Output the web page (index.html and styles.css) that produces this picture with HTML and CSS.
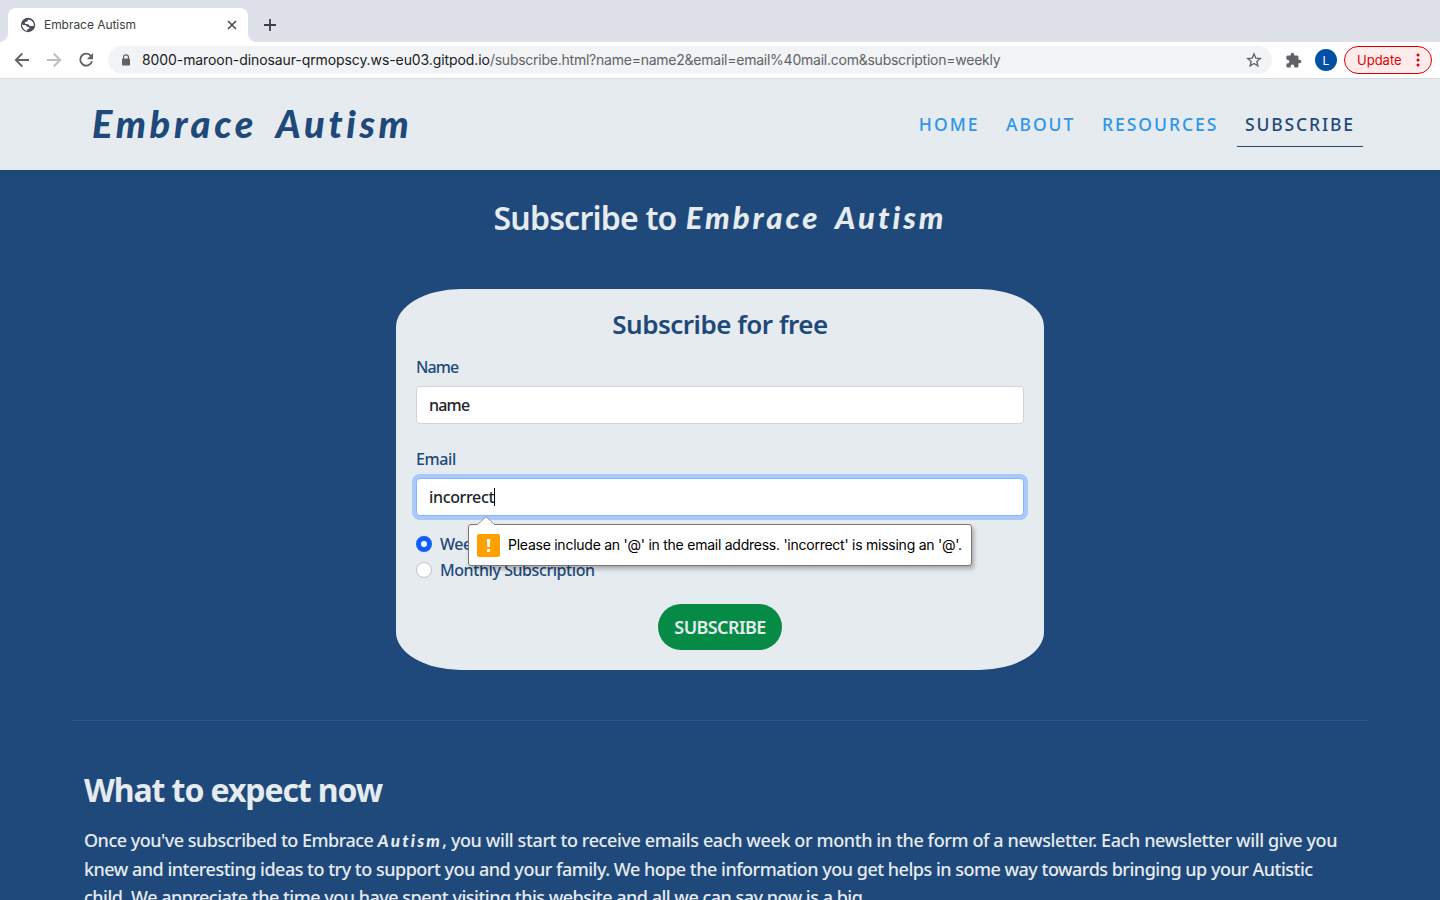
FILE: index.html
```html
<!DOCTYPE html>
<html lang="en">
<head>
<meta charset="utf-8">
<title>Embrace Autism</title>
<link rel="stylesheet" href="styles.css">
</head>
<body>
<div class="tabstrip">
  <div class="tab">
    <svg class="globe" viewBox="0 0 16 16"><circle cx="8" cy="8" r="7.2" fill="#4a4d55"/><path d="M8.600 2.500 7.300 4.200 4.800 5.200 5.300 7 8.400 7.300 9.600 8.900 13.900 8.900A6 6 0 0 0 8.600 2.500ZM2.200 6.600A6 6 0 0 0 7.100 13.900L7.400 12.300 9.500 11.500 9.200 10.200 6.800 9.500 5.800 8.200 2.800 8Z" fill="#fff"/></svg>
    <span class="tab-title">Embrace Autism</span>
    <svg class="close" viewBox="0 0 10 10"><path d="M1 1 9 9M9 1 1 9" stroke="#45494d" stroke-width="1.6"/></svg>
  </div>
  <svg class="plus" viewBox="0 0 12 12"><path d="M6 0V12M0 6H12" stroke="#3c4043" stroke-width="1.8"/></svg>
</div>
<div class="toolbar">
  <svg class="nav-icon" viewBox="0 0 16 16"><path d="M15 8H2M8.3 1.5 1.8 8l6.5 6.5" fill="none" stroke="#5f6368" stroke-width="1.8"/></svg>
  <svg class="nav-icon" viewBox="0 0 16 16"><path d="M1 8H14M7.7 1.5 14.2 8l-6.5 6.5" fill="none" stroke="#babcbe" stroke-width="1.8"/></svg>
  <svg class="nav-icon" viewBox="0 0 16 16"><path d="M13.3 4.4A6 6 0 1 0 14 9.3" fill="none" stroke="#5f6368" stroke-width="1.9"/><path d="M15 1V7.2H8.8Z" fill="#5f6368"/></svg>
  <div class="omnibox">
    <svg class="lock" viewBox="0 0 10 13"><path d="M2.5 5V3.3a2.5 2.5 0 0 1 5 0V5" fill="none" stroke="#5f6368" stroke-width="1.2"/><rect x="1" y="4.5" width="8" height="7" rx=".8" fill="#5f6368"/></svg>
    <span class="url"><span class="host">8000-maroon-dinosaur-qrmopscy.ws-eu03.gitpod.io</span><span class="path">/subscribe.html?name=name2&amp;email=email%40mail.com&amp;subscription=weekly</span></span>
    <svg class="star" viewBox="0 0 24 24"><path d="m12 3 2.7 6.1 6.7.6-5.1 4.5 1.5 6.5-5.8-3.4-5.8 3.4 1.5-6.5-5.1-4.5 6.7-.6Z" fill="none" stroke="#5f6368" stroke-width="2"/></svg>
  </div>
  <svg class="puzzle" viewBox="0 0 24 24"><path d="M20.5 11H19V7c0-1.1-.9-2-2-2h-4V3.500a2.500 2.500 0 0 0-5 0V5H4c-1.100 0-2 .9-2 2v3.800h1.500a2.700 2.700 0 0 1 0 5.400H2V20c0 1.100.9 2 2 2h3.800v-1.500a2.700 2.700 0 0 1 5.400 0V22H17c1.100 0 2-.9 2-2v-4h1.500a2.500 2.500 0 0 0 0-5Z" fill="#5f6368"/></svg>
  <div class="avatar">L</div>
  <div class="update"><span>Update</span><svg viewBox="0 0 4 14"><g fill="#d00"><circle cx="2" cy="2" r="1.5"/><circle cx="2" cy="7" r="1.5"/><circle cx="2" cy="12" r="1.5"/></g></svg></div>
</div>
<header class="site-header">
  <div class="logo">Embrace Autism</div>
  <nav class="menu">
    <a>HOME</a><a>ABOUT</a><a>RESOURCES</a><a class="active">SUBSCRIBE</a>
  </nav>
</header>
<main class="page">
  <h1 class="title"><span class="title-text">Subscribe to</span><span class="brand">Embrace Autism</span></h1>
  <form class="card" novalidate>
    <h2 class="card-title"><span>Subscribe for free</span></h2>
    <label class="label name-label">Name</label>
    <div class="field">name</div>
    <label class="label email-label">Email</label>
    <div class="field focus"><span class="typed">incorrect</span><i class="caret"></i>
      <div class="tooltip">
        <svg class="pointer" viewBox="0 0 18 9"><path d="M0 9 9 .7 18 9" fill="#fff" stroke="#8c8c8c"/></svg>
        <div class="warn"><svg viewBox="0 0 23 23"><path d="M9.900 5h3.400l-.5 8h-2.400ZM10.100 15h3v3h-3z" fill="#fff"/></svg></div>
        <span class="tip-text">Please include an '@' in the email address. 'incorrect' is missing an '@'.</span>
      </div>
    </div>
    <div class="option weekly"><i class="radio checked"></i><span>Weekly Subscription</span></div>
    <div class="option"><i class="radio"></i><span>Monthly Subscription</span></div>
    <div class="submit"><span>SUBSCRIBE</span></div>
  </form>
  <div class="rule"></div>
  <section class="expect">
    <h2 class="expect-title">What to expect now</h2>
    <p class="copy"><span class="line"><span class="lead">Once you've subscribed to Embrace</span> <b class="brand-small">Autism</b><span class="rest">, you will start to receive emails each week or month in the form of a newsletter. Each newsletter will give you</span></span>
    <span class="line">knew and interesting ideas to try to support you and your family. We hope the information you get helps in some way towards bringing up your Autistic</span>
    <span class="line">child. We appreciate the time you have spent visiting this website and all we can say now is a big</span></p>
  </section>
</main>
</body>
</html>
```
FILE: styles.css
```css
* { box-sizing: border-box; }
body { margin: 0; width: 1440px; height: 900px; overflow: hidden; display: flex; flex-direction: column; background: #1f497b; font-family: "Noto Sans", sans-serif; color: #1f497b; }
svg { display: block; flex: none; }
span { white-space: nowrap; }
.tabstrip { height: 42px; flex: none; background: #dee1e9; display: flex; align-items: flex-end; padding-left: 8px; font-family: Inter, sans-serif; }
.tab { width: 240px; height: 34px; background: #fff; border-radius: 8px 8px 0 0; display: flex; align-items: center; padding: 0 11px 0 12px; position: relative; }
.tab::before, .tab::after { content: ""; position: absolute; bottom: 0; width: 8px; height: 8px; }
.tab::before { left: -8px; background: radial-gradient(circle at 0 0, #dee1e9 7.5px, #fff 8px); }
.tab::after { right: -8px; background: radial-gradient(circle at 100% 0, #dee1e9 7.5px, #fff 8px); }
.globe { width: 16px; height: 16px; margin-right: 8px; }
.tab-title { font-size: 12px; color: #3c4043; flex: 1; letter-spacing: -.05px; padding-bottom: 2px; }
.close { width: 10px; height: 10px; }
.plus { width: 12px; height: 12px; margin: 0 0 11px 16px; }
.toolbar { height: 37px; flex: none; background: #fff; border-bottom: 1px solid #d5d8dc; display: flex; align-items: center; padding-left: 14px; font-family: Inter, sans-serif; }
.nav-icon { width: 16px; height: 16px; margin-right: 16px; }
.omnibox { width: 1164px; height: 28px; margin-left: -2px; border-radius: 14px; background: #f1f3f4; display: flex; align-items: center; padding: 0 10px 0 13px; }
.lock { width: 10px; height: 13px; margin-right: 11px; }
.url { flex: 1; font-size: 14px; color: #202124; padding-bottom: 1px; }
.host { letter-spacing: -.09px; }
.path { color: #5f6368; letter-spacing: -.24px; }
.star { width: 16px; height: 16px; }
.puzzle { width: 17px; height: 17px; margin-left: 13px; }
.avatar { width: 22px; height: 22px; margin-left: 13px; border-radius: 50%; background: #0051a4; color: #fff; font-size: 12px; display: flex; align-items: center; justify-content: center; }
.update { width: 88px; height: 28px; margin-left: 7px; border: 1px solid #d00; border-radius: 14px; background: #fdeceb; color: #d00; font-size: 13px; display: flex; align-items: center; justify-content: space-between; padding: 0 11px 0 12px; }
.update svg { width: 4px; height: 14px; }
.site-header { height: 91px; flex: none; background: #e6ebef; display: flex; justify-content: space-between; padding: 0 77px 0 92px; }
.logo, .brand, .brand-small { font-family: Lato, sans-serif; font-weight: 900; font-style: italic; white-space: nowrap; }
.logo { font-size: 38px; line-height: 88px; letter-spacing: 3.7px; word-spacing: 8px; }
.menu { display: flex; padding-top: 24px; }
.menu a { height: 44px; line-height: 42px; font-size: 17.5px; font-weight: 500; color: #2d96e8; letter-spacing: 2px; padding: 0 8px; white-space: nowrap; margin-left: 10.5px; }
.menu .active { color: #1f497b; border-bottom: 1px solid #1f497b; width: 126px; letter-spacing: 1.85px; }
.page { display: flex; flex-direction: column; align-items: center; color: #e6ebef; }
.title { margin: 0; height: 119px; padding-top: 24px; width: 453px; line-height: 48px; font-size: 32px; font-weight: 600; display: flex; justify-content: space-between; }
.title-text { letter-spacing: -.8px; }
.brand { font-size: 31px; line-height: 47px; letter-spacing: 3px; word-spacing: 6px; }
.card { width: 648px; height: 381px; border-radius: 10%; background: #e6ebef; color: #1f497b; padding: 20px; }
.card-title { margin: 0; text-align: center; font-size: 26px; font-weight: 600; line-height: 31px; letter-spacing: -.5px; }
.label { display: block; font-size: 16px; line-height: 24px; letter-spacing: -.4px; font-weight: 500; }
.name-label { margin-top: 15px; letter-spacing: -.9px; }
.email-label { margin-top: 23px; }
.field { position: relative; height: 38px; margin-top: 7px; border: 1px solid #ced4da; border-radius: 4px; background: #fff; color: #212529; font-size: 16px; display: flex; align-items: center; padding: 0 12px; letter-spacing: -.8px; font-weight: 500; }
.focus { border-color: #86b7fe; box-shadow: 0 0 0 4px #a9c9f8; }
.typed { letter-spacing: -.35px; }
.caret { width: 1px; height: 18px; background: #000; }
.tooltip { position: absolute; left: 51px; top: 45px; width: 504px; height: 42px; border: 1px solid #777; border-radius: 3px; background: #fff; box-shadow: 2px 3px 4px rgba(0,0,0,.28); color: #000; font: 14px Inter, sans-serif; display: flex; align-items: center; gap: 8px; padding-left: 8px; z-index: 2; letter-spacing: -.25px; }
.pointer { position: absolute; left: 8px; top: -9px; width: 18px; height: 9px; }
.warn { flex: none; width: 23px; height: 23px; border-radius: 2px; background: #ffa000; }
.tip-text { padding-bottom: 1px; }
.option { height: 26px; display: flex; align-items: center; gap: 8px; font-size: 16px; letter-spacing: -.43px; font-weight: 500; }
.weekly { margin-top: 15px; }
.radio { width: 16px; height: 16px; border: 1px solid #bfc1c4; border-radius: 50%; background: #fff; }
.checked { border: 5px solid #0d5efd; }
.submit { width: 124px; height: 46px; margin: 21px auto 0; border-radius: 23px; background: #058b45; color: #e6ebef; font-size: 18px; font-weight: 600; line-height: 46px; text-align: center; letter-spacing: -.6px; }
.rule { width: 1296px; height: 1px; margin-top: 50px; background: #225a98; }
.expect { width: 1272px; padding-top: 45px; }
.expect-title { margin: 0; font-size: 32px; line-height: 48px; font-weight: 700; letter-spacing: -1.1px; white-space: nowrap; }
.copy { margin: 12px 0 0; font-size: 18px; line-height: 28.2px; font-weight: 500; letter-spacing: -.5px; }
.line { display: block; }
.rest { letter-spacing: -.39px; }
.brand-small { font-size: 17px; letter-spacing: 2.2px; }
```
